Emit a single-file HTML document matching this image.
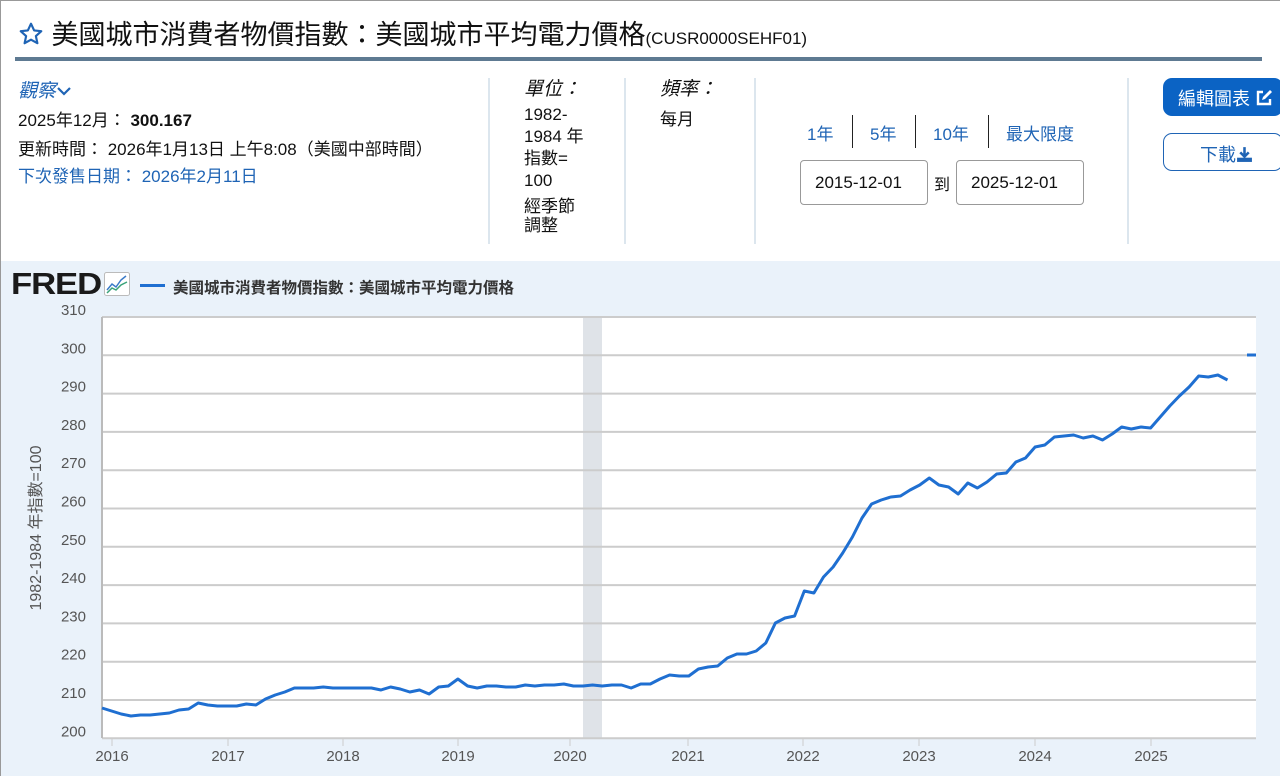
<!DOCTYPE html>
<html><head><meta charset="utf-8"><style>
*{margin:0;padding:0;box-sizing:border-box}
body{width:1280px;height:776px;overflow:hidden;background:#fff;font-family:"Liberation Sans","Noto Sans CJK TC",sans-serif;position:relative;color:#111}
.frame{position:absolute;left:0;top:0;width:1280px;height:776px;border-left:1px solid #999;border-top:1px solid #999}
.title{position:absolute;left:18px;top:13px;font-size:27px;color:#111;white-space:nowrap}
.title small{font-size:17px}
.rule{position:absolute;left:15px;top:57px;width:1247px;height:4px;background:#5e7a92}
.a{position:absolute;white-space:nowrap}
.blue{color:#1f64b5}
.vsep{position:absolute;top:78px;width:2px;height:166px;background:#dce6ee}
.box{position:absolute;top:160px;height:45px;border:1px solid #999;border-radius:4px;font-size:17px;padding:12px 0 0 14px}
.chartbg{position:absolute;left:1px;top:261px;width:1279px;height:515px;background:#eaf2fa}
.t17{font-size:17px}
</style></head><body>
<div class="frame"></div>
<div class="title"><svg width="26" height="26" viewBox="0 0 24 24" style="vertical-align:-3px"><path d="M12 2.5l2.9 6.2 6.6.7-5 4.5 1.4 6.6L12 17.2 6.1 20.5l1.4-6.6-5-4.5 6.6-.7z" fill="none" stroke="#1f64b5" stroke-width="2" stroke-linejoin="round"/></svg> 美國城市消費者物價指數：美國城市平均電力價格<small>(CUSR0000SEHF01)</small></div>
<div class="rule"></div>
<div class="a blue" style="left:18px;top:76px;font-size:19px;font-style:italic">觀察<svg width="16" height="12" viewBox="0 0 16 12"><path d="M2 3l6 6 6-6" fill="none" stroke="#1f64b5" stroke-width="2.2"/></svg></div>
<div class="a t17" style="left:18px;top:106px">2025年12月： <b>300.167</b></div>
<div class="a t17" style="left:18px;top:135px">更新時間： 2026年1月13日 上午8:08（美國中部時間）</div>
<div class="a blue t17" style="left:18px;top:162px">下次發售日期： 2026年2月11日</div>
<div class="vsep" style="left:488px"></div>
<div class="a" style="left:524px;top:74px;font-size:19px;font-style:italic">單位：</div>
<div class="a t17" style="left:524px;top:104px;line-height:22px">1982-<br>1984 年<br>指數=<br>100</div>
<div class="a t17" style="left:524px;top:197px;line-height:19px">經季節<br>調整</div>
<div class="vsep" style="left:624px"></div>
<div class="a" style="left:660px;top:74px;font-size:19px;font-style:italic">頻率：</div>
<div class="a t17" style="left:660px;top:105px">每月</div>
<div class="vsep" style="left:754px"></div>
<div class="a blue t17" style="left:807px;top:120px">1年</div>
<div class="a" style="left:852px;top:115px;width:1px;height:33px;background:#222"></div>
<div class="a blue t17" style="left:870px;top:120px">5年</div>
<div class="a" style="left:915px;top:115px;width:1px;height:33px;background:#222"></div>
<div class="a blue t17" style="left:933px;top:120px">10年</div>
<div class="a" style="left:988px;top:115px;width:1px;height:33px;background:#222"></div>
<div class="a blue t17" style="left:1006px;top:120px">最大限度</div>
<div class="box" style="left:800px;width:128px">2015-12-01</div>
<div class="a" style="left:934px;top:171px;font-size:16px">到</div>
<div class="box" style="left:956px;width:128px">2025-12-01</div>
<div class="vsep" style="left:1127px"></div>
<div class="a" style="left:1163px;top:78px;width:120px;height:38px;background:#0b63c4;border-radius:9px;color:#fff;font-size:18px;padding:7px 0 0 15px">編輯圖表 <svg width="18" height="18" viewBox="0 0 18 18" style="vertical-align:-2px"><path d="M8 3H3v12h12v-5" fill="none" stroke="#fff" stroke-width="2.4"/><path d="M7 11l1-3 7-7 2 2-7 7z" fill="#fff"/></svg></div>
<div class="a" style="left:1163px;top:133px;width:120px;height:38px;border:1px solid #1f64b5;border-radius:9px;color:#1f64b5;font-size:18px;padding:7px 0 0 36px">下載<svg width="17" height="17" viewBox="0 0 16 16" style="vertical-align:-2px"><path d="M8 1v9M4 6l4 4 4-4" fill="none" stroke="#1f64b5" stroke-width="2.4"/><path d="M1 11v4h14v-4z" fill="#1f64b5"/></svg></div>

<div class="chartbg"></div>
<div class="a" style="left:11px;top:266px;font-size:31px;font-weight:900;letter-spacing:-1px;color:#1a1a1a;transform:scaleX(1.12);transform-origin:left">FRED</div>
<svg class="a" style="left:104px;top:272px" width="26" height="24" viewBox="0 0 26 24"><rect x="0.5" y="0.5" width="25" height="23" rx="2" fill="#fff" stroke="#bbb"/><path d="M3 18l5-6 4 3 5-7 5-4" fill="none" stroke="#3b7bc8" stroke-width="1.5"/><path d="M3 21l5-5 4 2 5-5 6-3" fill="none" stroke="#3aa37a" stroke-width="1.5"/></svg>
<div class="a" style="left:140px;top:284px;width:25px;height:3px;background:#1f6fd1"></div>
<div class="a" style="left:173px;top:276px;font-size:15.5px;font-weight:bold;color:#333">美國城市消費者物價指數：美國城市平均電力價格</div>
<svg class="a" style="left:0;top:290px" width="1280" height="486" id="ch"></svg>
<script>
var s='';
var Y=function(v){return 317+(310-v)*3.83-290};
s+='<rect x="102" y="27" width="1154" height="421" fill="#fff"/>';
s+='<rect x="583" y="27" width="19" height="421" fill="#dfe3e8"/>';
for(var v=200;v<=310;v+=10){var y=Y(v);s+='<line x1="102" x2="1256" y1="'+y+'" y2="'+y+'" stroke="#ccc" stroke-width="2"/>';s+='<text x="86" y="'+(y-2)+'" font-size="15" fill="#555" text-anchor="end" font-family="Liberation Sans">'+v+'</text>';}
s+='<line x1="102" x2="102" y1="27" y2="448" stroke="#bbb" stroke-width="2"/>';
var yrs=[112,228,343,458,570,688,803,919,1035,1151];
for(var i=0;i<10;i++){s+='<line x1="'+yrs[i]+'" x2="'+yrs[i]+'" y1="448" y2="456" stroke="#ccc"/><text x="'+yrs[i]+'" y="471" font-size="15" fill="#555" text-anchor="middle" font-family="Liberation Sans">'+(2016+i)+'</text>';}
s+='<text transform="translate(41,238) rotate(-90)" font-size="16" fill="#555" text-anchor="middle" font-family="Liberation Sans,Noto Sans CJK TC">1982-1984 年指數=100</text>';
var ys=[708,711,714,716,715,715,714,713,710,709,703,705,706,706,706,704,705,699,695,692,688,688,688,687,688,688,688,688,688,690,687,689,692,690,694,687,686,679,686,688,686,686,687,687,685,686,685,685,684,686,686,685,686,685,685,688,684,684,679,675,676,676,669,667,666,658,654,654,651,643,623,618,616,591,593,577,567,553,537,518,504,500,497,496,490,485,478,485,487,494,483,488,482,474,473,462,458,447,445,437,436,435,438,436,440,434,427,429,427,428,417,406,396,387,376,377,375,380];
var p='';for(var m=0;m<ys.length;m++){p+=(m?'L':'M')+(102+m*9.62).toFixed(1)+' '+(ys[m]-290);}
s+='<path d="'+p+'" fill="none" stroke="#1f6fd1" stroke-width="3" stroke-linejoin="round"/>';
s+='<line x1="1247" x2="1256" y1="'+(355-290)+'" y2="'+(355-290)+'" stroke="#1f6fd1" stroke-width="3"/>';
document.getElementById('ch').innerHTML=s;
</script>
</body></html>
